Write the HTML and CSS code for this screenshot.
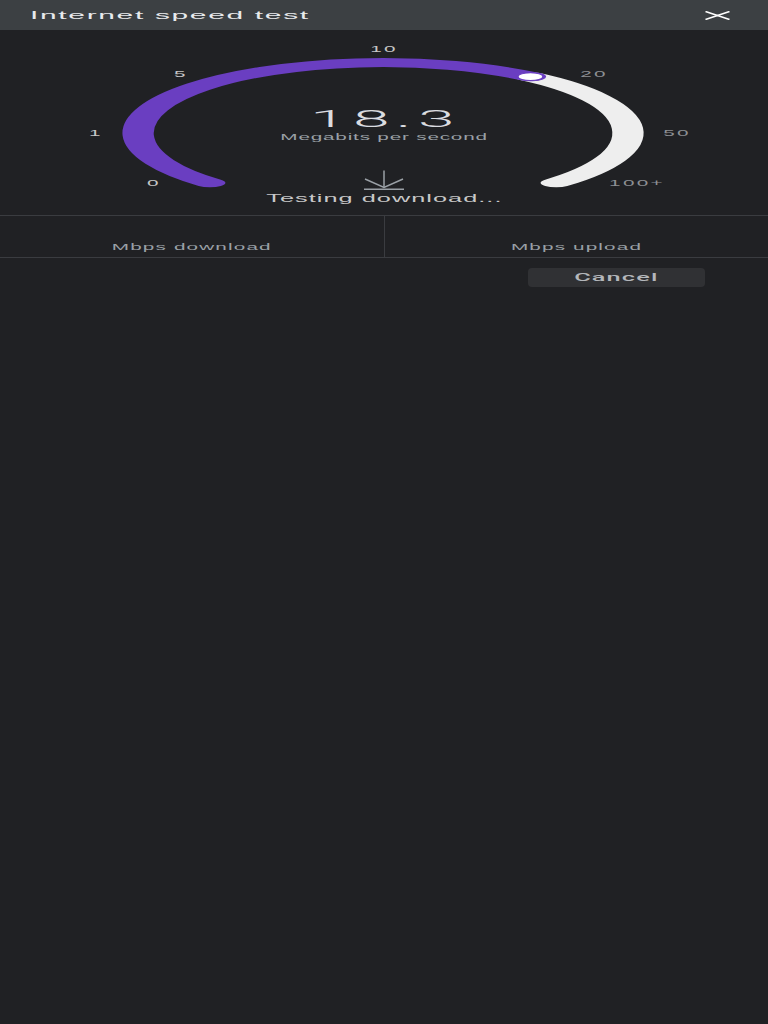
FILE: index.html
```html
<!DOCTYPE html>
<html lang="en">
<head>
<meta charset="utf-8">
<title>Internet speed test</title>
<link rel="stylesheet" href="styles.css">
</head>
<body>
<div class="app">
  <header class="header">
    <span class="title">Internet speed test</span>
    <svg class="close" width="25" height="9" viewBox="0 0 25 9" aria-label="Close">
      <line x1="0.5" y1="0.5" x2="24.5" y2="8.5" stroke="#ffffff" stroke-width="1.6"/>
      <line x1="0.5" y1="8.5" x2="24.5" y2="0.5" stroke="#ffffff" stroke-width="1.6"/>
    </svg>
  </header>

  <section class="gauge">
    <svg class="dial" width="768" height="185" viewBox="0 0 768 185">
      <g transform="translate(383 103) scale(3.475 1)">
        <path d="M 42.43 -56.3 A 70.5 70.5 0 0 1 49.85 49.85" stroke="#eeeeee" stroke-width="9" fill="none" stroke-linecap="round"/>
        <path d="M -49.85 49.85 A 70.5 70.5 0 0 1 42.43 -56.3" stroke="#6a3ec1" stroke-width="9" fill="none" stroke-linecap="round"/>
        <circle cx="42.43" cy="-56.3" r="3.8" fill="#ffffff" stroke="#6a3ec1" stroke-width="0.8"/>
      </g>
    </svg>
    <span class="tick done t0">0</span>
    <span class="tick done t1">1</span>
    <span class="tick done t5">5</span>
    <span class="tick done t10">10</span>
    <span class="tick t20">20</span>
    <span class="tick t50">50</span>
    <span class="tick t100">100+</span>

    <div class="num"><span class="st num-text">18.3</span></div>
    <div class="unit"><span class="st">Megabits per second</span></div>
    <svg class="dl-icon" width="44" height="20" viewBox="0 0 44 20">
      <line x1="22" y1="0.5" x2="22" y2="17.5" stroke="#9aa0a6" stroke-width="1.5"/>
      <polyline points="3,9 22,17.5 41,9" fill="none" stroke="#9aa0a6" stroke-width="1.5"/>
      <line x1="2" y1="19.2" x2="42" y2="19.2" stroke="#9aa0a6" stroke-width="1.5"/>
    </svg>
    <div class="status"><span class="st">Testing download...</span></div>
  </section>

  <section class="results">
    <div class="cell cell-left"><span class="st label">Mbps download</span></div>
    <div class="cell"><span class="st label">Mbps upload</span></div>
  </section>

  <div class="actions">
    <button class="cancel"><span class="st">Cancel</span></button>
  </div>
</div>
</body>
</html>
```

FILE: styles.css
```css
html, body {
  margin: 0;
  padding: 0;
  background: #202124;
}

body {
  width: 768px;
  height: 1024px;
  overflow: hidden;
  font-family: "Liberation Sans", Arial, sans-serif;
}

.app {
  width: 768px;
}

.st {
  display: inline-block;
  transform: scaleX(2.3);
  transform-origin: center center;
  white-space: nowrap;
}

.header {
  height: 30px;
  background: #3c4043;
  display: flex;
  align-items: center;
  justify-content: space-between;
  padding: 0 38px 0 30px;
  box-sizing: border-box;
}

.title {
  display: inline-block;
  font-size: 11.5px;
  line-height: 13px;
  letter-spacing: 0.65px;
  color: #e8eaed;
  transform: scaleX(2.6);
  transform-origin: left center;
  white-space: nowrap;
}

.close {
  display: block;
}

.gauge {
  position: relative;
  height: 186px;
  box-sizing: border-box;
  border-bottom: 1px solid #3a3c40;
  padding-top: 77px;
  display: flex;
  flex-direction: column;
  align-items: center;
}

.dial {
  position: absolute;
  left: 0;
  top: 0;
  overflow: visible;
}

.tick {
  position: absolute;
  font-size: 9px;
  line-height: 9px;
  letter-spacing: 1px;
  color: #8d8f93;
  transform: translate(-50%, -50%) scaleX(2.3);
  white-space: nowrap;
}

.tick.done {
  color: #c6c6c6;
}

.t0 { left: 154px; top: 153px; }
.t1 { left: 96px; top: 103px; }
.t5 { left: 181px; top: 44px; }
.t10 { left: 384px; top: 19px; }
.t20 { left: 594px; top: 44px; }
.t50 { left: 677px; top: 103px; }
.t100 { left: 637px; top: 153px; }

.num {
  position: relative;
  font-family: Roboto, "Liberation Sans", sans-serif;
  font-weight: 300;
  font-size: 24px;
  line-height: 24px;
  letter-spacing: 2.3px;
  color: #dadce0;
  padding-left: 2.3px;
}

.num-text {
  transform: scaleX(2.75);
}

.unit {
  position: relative;
  margin-top: 1px;
  font-size: 9px;
  line-height: 11px;
  letter-spacing: 0.35px;
  color: #9aa0a6;
}

.dl-icon {
  position: relative;
  display: block;
  margin-top: 27px;
}

.status {
  position: relative;
  margin-top: 2px;
  font-size: 11px;
  line-height: 13px;
  letter-spacing: 0.45px;
  color: #c8c8c8;
}

.results {
  display: flex;
  height: 42px;
  box-sizing: border-box;
  border-bottom: 1px solid #3a3c40;
}

.cell {
  flex: 1;
  display: flex;
  align-items: flex-end;
  justify-content: center;
  padding-bottom: 4px;
}

.cell-left {
  border-right: 1px solid #3a3c40;
}

.label {
  font-size: 9px;
  line-height: 11px;
  letter-spacing: 0.5px;
  color: #9aa0a6;
}

.actions {
  display: flex;
  justify-content: flex-end;
  padding: 10px 63px 0 0;
}

.cancel {
  width: 177px;
  height: 19px;
  padding: 0;
  border: none;
  border-radius: 4px;
  background: #303134;
  color: #b4b7bb;
  font-family: Roboto, "Liberation Sans", sans-serif;
  font-weight: 500;
  font-size: 11px;
  line-height: 19px;
  letter-spacing: 0.5px;
}
```
